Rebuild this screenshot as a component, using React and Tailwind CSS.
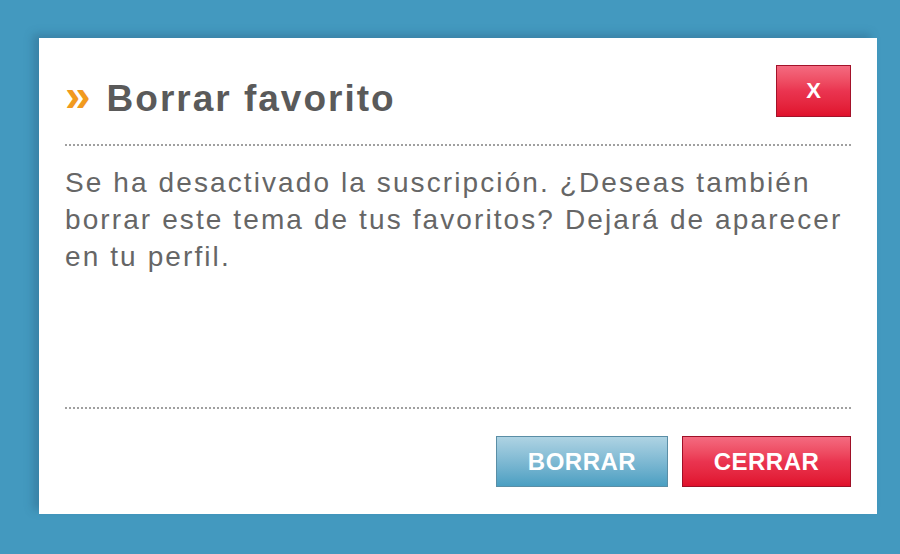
import React from "react";

const font = { fontFamily: '"Liberation Sans", Arial, sans-serif' };

const BorrarFavoritoDialog = () => {
  return (
    <div
      className="w-[900px] h-[554px] bg-[#4399bf] pt-[38px] px-[23px] overflow-hidden"
      style={font}
    >
      <div className="ml-[16px] w-[838px] h-[476px] bg-white flex flex-col px-[26px] pt-[27px] pb-[27px] shadow-[-6px_-4px_8px_rgba(40,90,120,0.35)]">
        {/* header */}
        <div className="flex items-center justify-between h-[52px]">
          <h2 className="flex items-center mt-[14px] text-[37px] font-bold text-[#5a5a5a] tracking-[2px] leading-none">
            <span className="text-[#f19a1e] text-[46px] mr-[14px] -mt-[6px]">»</span>
            Borrar favorito
          </h2>
          <button className="w-[75px] h-[52px] border border-[#a3122a] bg-gradient-to-b from-[#f46a80] via-[#ea3450] to-[#e0102c] text-white font-bold text-[22px] leading-none">
            X
          </button>
        </div>

        <div className="mt-[27px] border-t-2 border-dotted border-[#a0a0a0]" />

        <p className="mt-[18px] text-[28px] leading-[37px] tracking-[2.1px] text-[#666666] whitespace-nowrap flex-1">
          Se ha desactivado la suscripción. ¿Deseas también
          <br />
          borrar este tema de tus favoritos? Dejará de aparecer
          <br />
          en tu perfil.
        </p>

        <div className="border-t-2 border-dotted border-[#a0a0a0]" />

        <div className="mt-[27px] flex justify-end gap-[14px]">
          <button className="w-[172px] h-[51px] border border-[#5a8ea6] bg-gradient-to-b from-[#aed3e3] to-[#4a9fc2] text-white font-bold text-[24px] tracking-[0.5px] leading-none">
            BORRAR
          </button>
          <button className="w-[169px] h-[51px] border border-[#9e1027] bg-gradient-to-b from-[#f46a80] via-[#ea3450] to-[#e0102c] text-white font-bold text-[24px] tracking-[0.5px] leading-none">
            CERRAR
          </button>
        </div>
      </div>
    </div>
  );
};

export default function App() {
  return <BorrarFavoritoDialog />;
}
